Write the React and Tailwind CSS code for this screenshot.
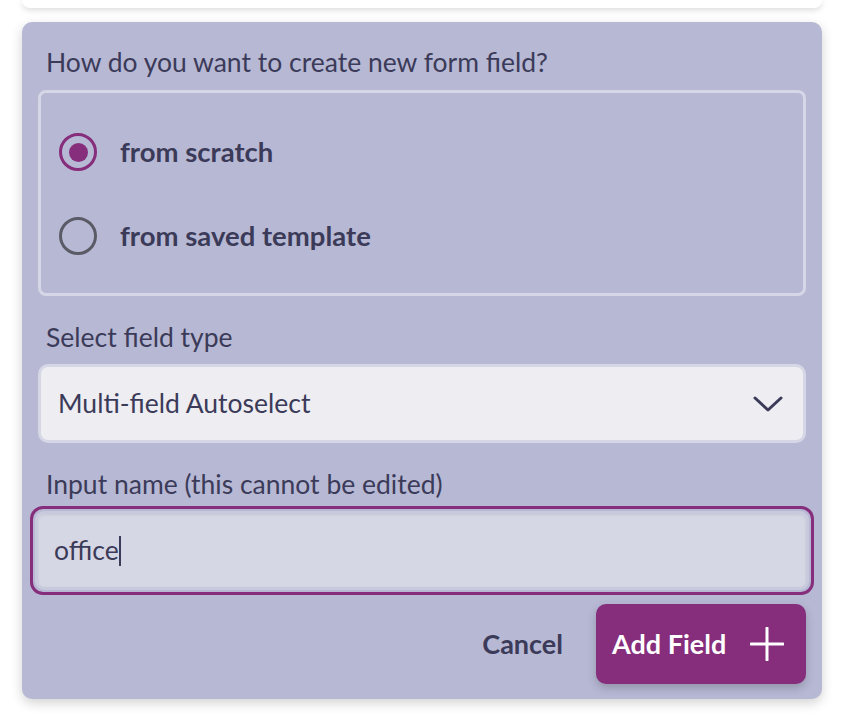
import React from "react";

export default function App() {
  return (
    <div
      className="w-[866px] h-[724px] bg-white overflow-hidden relative"
      style={{ fontFamily: "Lato, 'Noto Sans', sans-serif" }}
    >
      <div className="ml-[22px] w-[800px] h-[8px] bg-white rounded-b-[10px] shadow-[0_2px_6px_rgba(0,0,0,0.15)]" />
      <div className="ml-[22px] w-[800px] mt-[14px] bg-[#b7b8d4] rounded-[10px] shadow-[0_4px_12px_rgba(0,0,0,0.18)] px-4 pt-6 pb-[15px] text-[#3b3b59]">
        <div className="pl-2 h-8 leading-8 text-[26.5px]">How do you want to create new form field?</div>
        <div className="mt-3 border-[3px] border-[#d5d6e6] rounded-[8px] pt-[17px] pb-[15px] pl-[18px]">
          <label className="flex items-center h-[84px]">
            <span className="w-[38px] h-[38px] rounded-full border-[3px] border-[#862d7b] flex items-center justify-center">
              <span className="w-[19px] h-[19px] rounded-full bg-[#862d7b]" />
            </span>
            <span className="ml-[23px] text-[27.5px] font-bold">from scratch</span>
          </label>
          <label className="flex items-center h-[84px]">
            <span className="w-[38px] h-[38px] rounded-full border-[3px] border-[#5b5b67]" />
            <span className="ml-[23px] text-[27.5px] font-bold">from saved template</span>
          </label>
        </div>
        <div className="mt-[25px] pl-2 h-8 leading-8 text-[26.5px]">Select field type</div>
        <div className="mt-[11px] h-[79px] bg-[#ededf2] border-[3px] border-[#d5d6e6] rounded-[10px] flex items-center justify-between pl-[17px] pr-[20px]">
          <span className="text-[26.5px]">Multi-field Autoselect</span>
          <svg width="30" height="16" viewBox="0 0 30 16" fill="none">
            <path d="M2 2 L15 14 L28 2" stroke="#3b3b59" strokeWidth="3" strokeLinecap="round" strokeLinejoin="round" />
          </svg>
        </div>
        <div className="mt-[25px] pl-2 h-8 leading-8 text-[26.5px]">Input name (this cannot be edited)</div>
        <div className="mt-[6px] -mx-2 border-[3px] border-[#862d7b] rounded-[13px] p-[2px]">
          <div className="h-[79px] bg-[#d6d7e5] border-[3px] border-[#c8c9dd] rounded-[9px] flex items-center pl-[16px] shadow-[inset_0_1px_3px_rgba(0,0,0,0.08)]">
            <span className="text-[26.5px]">office</span>
            <span className="w-[2px] h-[30px] bg-[#3b3b59]" />
          </div>
        </div>
        <div className="mt-[9px] flex items-center justify-end">
          <span className="text-[27px] font-bold mr-[33px]">Cancel</span>
          <button className="h-[80px] w-[210px] bg-[#862d7b] rounded-[10px] shadow-[0_4px_10px_rgba(0,0,0,0.2)] flex items-center pl-4 text-white">
            <span className="text-[27px] font-bold">Add Field</span>
            <svg className="ml-[24px]" width="34" height="34" viewBox="0 0 34 34" fill="none">
              <path d="M17 1 V33 M1 17 H33" stroke="white" strokeWidth="3" strokeLinecap="round" />
            </svg>
          </button>
        </div>
      </div>
    </div>
  );
}
